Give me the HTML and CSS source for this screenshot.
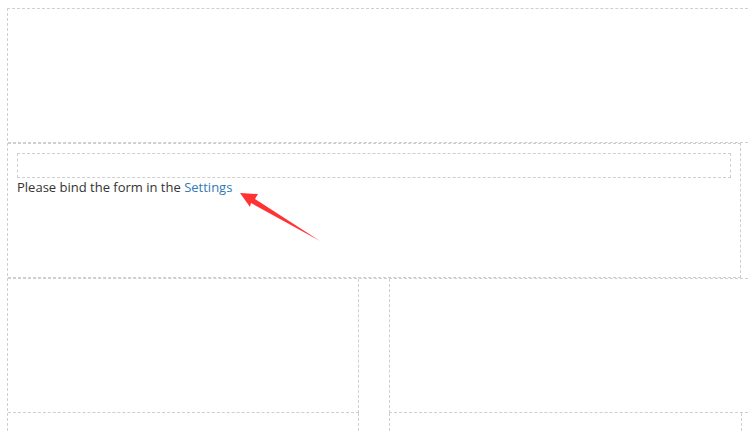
FILE: index.html
```html
<!DOCTYPE html>
<html lang="en">
<head>
<meta charset="utf-8">
<title>Form block</title>
<link rel="stylesheet" href="styles.css">
</head>
<body>
<div class="page">
  <div class="hero"></div>
  <div class="form-section">
    <div class="form-slot"></div>
    <p class="notice">Please bind the form in the <a class="link" href="#">Settings</a></p>
  </div>
  <div class="row row-top">
    <div class="col col-left"></div>
    <div class="col-gap"></div>
    <div class="col col-right"></div>
  </div>
  <div class="row row-bottom">
    <div class="col col-left"></div>
    <div class="col-gap"></div>
    <div class="col col-right col-closed"></div>
  </div>
  <svg class="arrow" width="90" height="60" viewBox="0 0 90 60" aria-hidden="true">
    <polygon points="0,0 18,1 15,6 80,48 11,10 10,14" fill="#ff3333"/>
  </svg>
</div>
</body>
</html>
```
FILE: styles.css
```css
html, body {
  margin: 0;
  padding: 0;
  background: #fff;
  overflow: hidden;
}
body {
  font-family: "Open Sans", "Noto Sans", sans-serif;
  color: #333;
}
.page {
  position: relative;
  margin: 8px 0 0 7px;
  width: 740px;
  height: 422px;
  overflow: hidden;
  border-left: 1px dashed #cfcfcf;
  border-top: 1px dashed #cfcfcf;
}
.hero {
  height: 133px;
  border-bottom: 1px dashed #cfcfcf;
}
.form-section {
  width: 714px;
  height: 115px;
  padding: 9px;
  border-top: 1px dashed #cfcfcf;
  border-right: 1px dashed #cfcfcf;
  border-bottom: 1px dashed #cfcfcf;
}
.form-slot {
  height: 23px;
  border: 1px dashed #cfcfcf;
}
.notice {
  margin: 0;
  font-size: 13px;
  line-height: 18px;
}
.link {
  color: #337ab7;
  text-decoration: none;
}
.row {
  display: flex;
}
.row-top {
  border-top: 1px dashed #cfcfcf;
}
.row-top .col {
  height: 133px;
  border-bottom: 1px dashed #cfcfcf;
}
.row-bottom .col {
  height: 18px;
}
.col-left {
  width: 350px;
  flex: none;
  border-right: 1px dashed #cfcfcf;
}
.col-gap {
  width: 30px;
  flex: none;
}
.col-right {
  flex: 1;
  border-left: 1px dashed #cfcfcf;
}
.col-closed {
  flex: none;
  width: 351px;
  border-right: 1px dashed #cfcfcf;
}
.arrow {
  position: absolute;
  left: 232px;
  top: 184px;
}
```
